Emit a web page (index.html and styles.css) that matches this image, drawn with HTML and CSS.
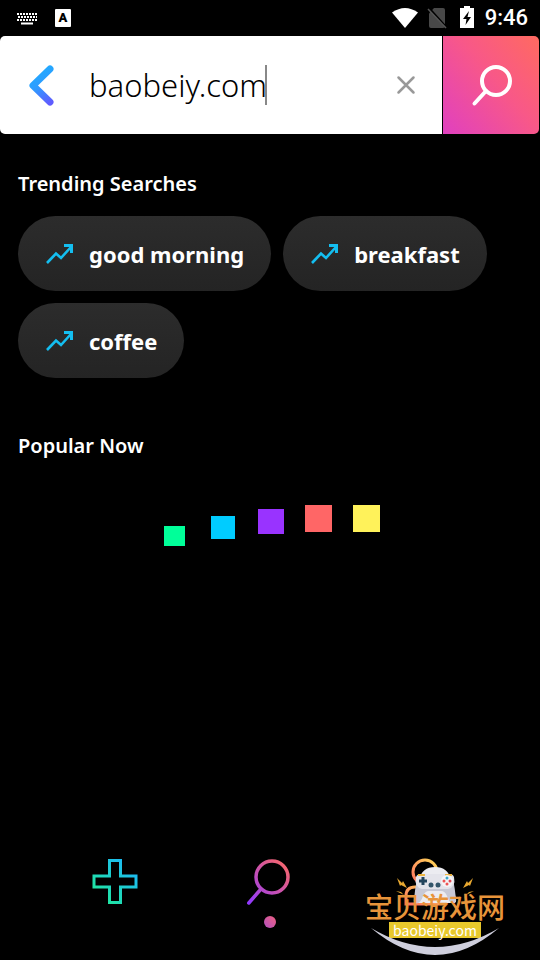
FILE: index.html
```
<!DOCTYPE html>
<html lang="en">
  <head>
    <meta charset="utf-8">
    <meta name="viewport" content="width=device-width, initial-scale=1.0"/>
    <title>Search</title>
    <link rel="stylesheet" href="styles.css">
  </head>
  <body>
    <!-- shared gradients and the trend arrow -->
    <svg class="defs" width="0" height="0" aria-hidden="true">
      <defs>
        <linearGradient id="back-grad" gradientUnits="userSpaceOnUse" x1="4" y1="8" x2="24" y2="42">
          <stop offset="0" stop-color="#1cb0ff"/>
          <stop offset=".5" stop-color="#2e9cff"/>
          <stop offset="1" stop-color="#5f5cff"/>
        </linearGradient>
        <linearGradient id="plus-grad" x1="0" y1="1" x2="1" y2="0">
          <stop offset=".1" stop-color="#20e89c"/>
          <stop offset=".9" stop-color="#1cb8f8"/>
        </linearGradient>
        <linearGradient id="find-grad" gradientUnits="userSpaceOnUse" x1="2" y1="46" x2="44" y2="4">
          <stop offset="0" stop-color="#9038ff"/>
          <stop offset="1" stop-color="#ff6a60"/>
        </linearGradient>
        <linearGradient id="user-grad" x1="0" y1="1" x2="1" y2="0">
          <stop offset="0" stop-color="#ff7060"/>
          <stop offset="1" stop-color="#ffd858"/>
        </linearGradient>
        <symbol id="trend" viewBox="0 0 28 22">
          <path d="M1 20 10 10.500l5 4.500L24.500 4.500" fill="none" stroke="#14bef0" stroke-width="2.600"/>
          <path d="M18 2.500h7.500V10" fill="none" stroke="#14bef0" stroke-width="3"/>
        </symbol>
      </defs>
    </svg>

    <header class="status">
      <svg width="20" height="14" viewBox="0 0 20 14" aria-hidden="true">
        <path d="M0 3h20M1 6h19M0 9h20" stroke="#fff" stroke-width="2" stroke-dasharray="2 1"/>
        <path d="M4 12.500h12" stroke="#fff" stroke-width="2"/>
      </svg>
      <span class="ime">A</span>
      <span class="spacer"></span>
      <svg class="wifi" width="28" height="22" viewBox="0 0 28 22" aria-hidden="true">
        <path d="M1 5.500Q14-3.500 27 5.500L14 21z" fill="#fff"/>
      </svg>
      <svg class="sim" width="20" height="22" viewBox="0 0 20 22" aria-hidden="true">
        <path d="M2 6.500 7 1h9q2 0 2 2v16q0 2-2 2H4q-2 0-2-2z" fill="#484848"/>
        <path d="M2 1l18 20" stroke="#000" stroke-width="2"/>
        <path d="M1 2l18 19" stroke="#555" stroke-width="1.500"/>
      </svg>
      <svg class="battery" width="14" height="22" viewBox="0 0 14 22" aria-hidden="true">
        <path d="M4 0h6v2h4v20H0V2h4z" fill="#fff"/>
        <path d="M9 5 3 13h3.500l-1 6L11 11H7.500z" fill="#000"/>
      </svg>
      <time class="clock">9:46</time>
    </header>

    <form class="search">
      <div class="search-box">
        <button type="button" class="back" aria-label="Back">
          <svg width="28" height="50" viewBox="0 0 28 50"><path d="M23 9 6 25.500 23 42" fill="none" stroke="url(#back-grad)" stroke-width="7" stroke-linecap="round" stroke-linejoin="round"/></svg>
        </button>
        <input class="query" type="text" value="baobeiy.com" size="11" aria-label="Search">
        <span class="caret"></span>
        <button type="reset" class="clear" aria-label="Clear">
          <svg width="20" height="20" viewBox="0 0 20 20"><path d="M2.500 2.500l15 15M17.500 2.500l-15 15" stroke="#999" stroke-width="2.500" stroke-linecap="round"/></svg>
        </button>
      </div>
      <button type="submit" class="go" aria-label="Search">
        <svg width="44" height="44" viewBox="0 0 44 44" fill="none" stroke="#fff" stroke-width="4" stroke-linecap="round"><circle cx="27" cy="18" r="14"/><path d="M17 28 5.500 40.500"/></svg>
      </button>
    </form>

    <main>
      <section>
        <h2>Trending Searches</h2>
        <div class="chips">
          <button type="button" class="chip"><svg width="28" height="22" aria-hidden="true"><use href="#trend"/></svg>good morning</button>
          <button type="button" class="chip"><svg width="28" height="22" aria-hidden="true"><use href="#trend"/></svg>breakfast</button>
          <button type="button" class="chip"><svg width="28" height="22" aria-hidden="true"><use href="#trend"/></svg>coffee</button>
        </div>
      </section>
      <section class="popular">
        <h2>Popular Now</h2>
        <svg class="loader" width="220" height="42" viewBox="0 0 220 42" role="img" aria-label="Loading">
          <path d="M4 22h21v20H4z" fill="#00ff99"/>
          <path d="M51 12h24v23H51z" fill="#00ccff"/>
          <path d="M98 5h26v25H98z" fill="#9933ff"/>
          <path d="M145 1h27v27h-27z" fill="#ff6666"/>
          <path d="M193 1h27v27h-27z" fill="#fff25a"/>
        </svg>
      </section>
    </main>

    <nav class="tabs">
      <a href="#create" aria-label="Create">
        <svg width="46" height="46" viewBox="0 0 46 46"><path d="M17.500 2.500h11v15.500h15.500v11h-15.500v15.500h-11V29H2V18h15.500z" fill="none" stroke="url(#plus-grad)" stroke-width="3"/></svg>
      </a>
      <a href="#search" class="active" aria-label="Search">
        <svg width="46" height="50" viewBox="0 0 46 50" fill="none" stroke="url(#find-grad)" stroke-width="3.500" stroke-linecap="round"><circle cx="25" cy="19" r="16"/><path d="M14 31 1.800 45"/></svg>
      </a>
      <a href="#profile" aria-label="Profile">
        <svg width="46" height="50" viewBox="0 0 46 50" fill="none" stroke="url(#user-grad)" stroke-width="3"><circle cx="23" cy="14" r="12"/><path d="M4 46V38q0-9 9-9h20q9 0 9 9v8z"/></svg>
      </a>
    </nav>

    <div class="mark">
      <svg class="pad" width="80" height="40" viewBox="0 0 80 40" aria-hidden="true">
        <path d="M24 14Q27 1 40 1t16 13l5 19q1 5-4 4H23q-5 1-4-4z" fill="#ececf1"/>
        <path d="M22 13q-2 10-3 20 0 5 4 4 3-1 5-7 2-5 6-5h12q4 0 6 5 2 6 5 7 4 1 4-4-1-10-3-20 0 9-9 10H31q-9-1-9-10" fill="#c8c9d6"/>
        <path d="M21 11q1-3 5-3h28q4 0 5 3 2 10-6 12H27q-8-2-6-12" fill="#e4e4eb"/>
        <path d="M23 9h7M50 9h7" stroke="#ecb440" stroke-width="2"/>
        <path d="M28 11v8M24 15h8" stroke="#24455d" stroke-width="3"/>
        <circle cx="36" cy="19" r="2.500" fill="#34566b"/><circle cx="43" cy="19" r="2.500" fill="#34566b"/>
        <circle cx="52" cy="15" r="6" fill="#f5f5f8"/>
        <circle cx="52" cy="12" r="1.500" fill="#3ba6c8"/><circle cx="52" cy="18" r="1.500" fill="#e55"/>
        <circle cx="49" cy="15" r="1.500" fill="#e55"/><circle cx="55" cy="15" r="1.500" fill="#df4a55"/>
        <path d="m2 12 5 5 1-2 4 7-6-3-1 1zM1 25l5 1 3 3M78 12l-5 5-1-2-4 7 6-3 1 1zM79 25l-5 1-3 3" fill="#e8a830"/>
      </svg>
      <div class="mark-name">宝贝游戏网</div>
      <div class="mark-url">baobeiy.com</div>
      <svg class="smile" width="128" height="28" viewBox="0 0 128 28" aria-hidden="true"><path d="M0 0q64 38 128 0Q64 54 0 0" fill="#cfcfdd"/></svg>
    </div>
  </body>
</html>
```
FILE: styles.css
```
* {
  box-sizing: border-box;
}
body {
  margin: 0;
  min-height: 100vh;
  display: flex;
  flex-direction: column;
  background: #000;
  color: #fff;
  font-family: "Noto Sans", "Open Sans", sans-serif;
}
button {
  border: 0;
  padding: 0;
  background: none;
  color: inherit;
  font-family: inherit;
  cursor: pointer;
}
svg { display: block; flex: none; }
.defs { position: absolute; }

.status {
  display: flex;
  align-items: center;
  height: 36px;
  padding: 0 12px 0 17px;
  font-family: "Roboto", sans-serif;
}
.ime {
  width: 16px;
  height: 18px;
  margin-left: 18px;
  border-radius: 1px;
  background: #fff;
  color: #000;
  font-size: 13px;
  line-height: 17px;
  font-weight: 900;
  text-align: center;
}
.spacer { flex: 1; }
.sim { margin-left: 8px; }
.battery { margin: 0 11px 2px 13px; }
.clock {
  font-size: 22px;
  line-height: 38px;
  font-weight: 500;
}

.search {
  display: flex;
  gap: 1px;
  height: 98px;
  padding-right: 1px;
}
.search-box {
  flex: 1;
  display: flex;
  align-items: center;
  min-width: 0;
  padding: 0 26px 0 27px;
  border-radius: 5px 0 0 5px;
  background: #fff;
}
.query {
  field-sizing: content;
  min-width: 0;
  margin-left: 34px;
  padding: 0;
  border: 0;
  outline: 0;
  background: none;
  color: #000;
  font-family: inherit;
  font-size: 31px;
  line-height: 44px;
  font-weight: 300;
}
.caret {
  width: 2px;
  height: 40px;
  margin-left: -2px;
  background: #888;
}
.clear { margin-left: auto; }
.go {
  display: grid;
  place-items: center;
  width: 96px;
  border-radius: 0 5px 5px 0;
  background: linear-gradient(50deg, #e040c0, #f85888 55%, #ff6a60);
}

main {
  flex: 1;
  padding: 34px 18px 0;
}
h2 {
  margin: 0;
  font-size: 20px;
  line-height: 32px;
  font-weight: 600;
}
.chips {
  display: flex;
  flex-wrap: wrap;
  gap: 12px;
  margin-top: 16px;
}
.chip {
  display: flex;
  align-items: center;
  gap: 15px;
  height: 75px;
  padding: 0 27px 0 28px;
  border-radius: 38px;
  background: linear-gradient(#2c2c2c, #242424);
  font-size: 22px;
  font-weight: 700;
}
.popular { margin-top: 52px; }
.loader { margin: 42px auto 0; }

.tabs {
  display: flex;
  justify-content: space-around;
  height: 102px;
  padding: 0 37px;
}
.tabs a { width: 46px; }
.active::after {
  content: "";
  display: block;
  width: 12px;
  height: 12px;
  margin: 8px auto 0;
  border-radius: 50%;
  background: linear-gradient(45deg, #b050c0, #f06080);
}

/* site mark laid over the tab bar */
.mark {
  position: absolute;
  right: 35px;
  bottom: 4px;
  display: flex;
  flex-direction: column;
  align-items: center;
  font-family: "Noto Sans CJK SC", sans-serif;
}
.pad { margin-bottom: -16px; }
.mark-name {
  color: #e8943a;
  font-size: 28px;
  line-height: 32px;
  font-weight: 500;
}
.mark-url {
  padding: 0 4px;
  background: #e8c82c;
  font-size: 14px;
  line-height: 16px;
}
.smile { margin-top: -10px; }
```
